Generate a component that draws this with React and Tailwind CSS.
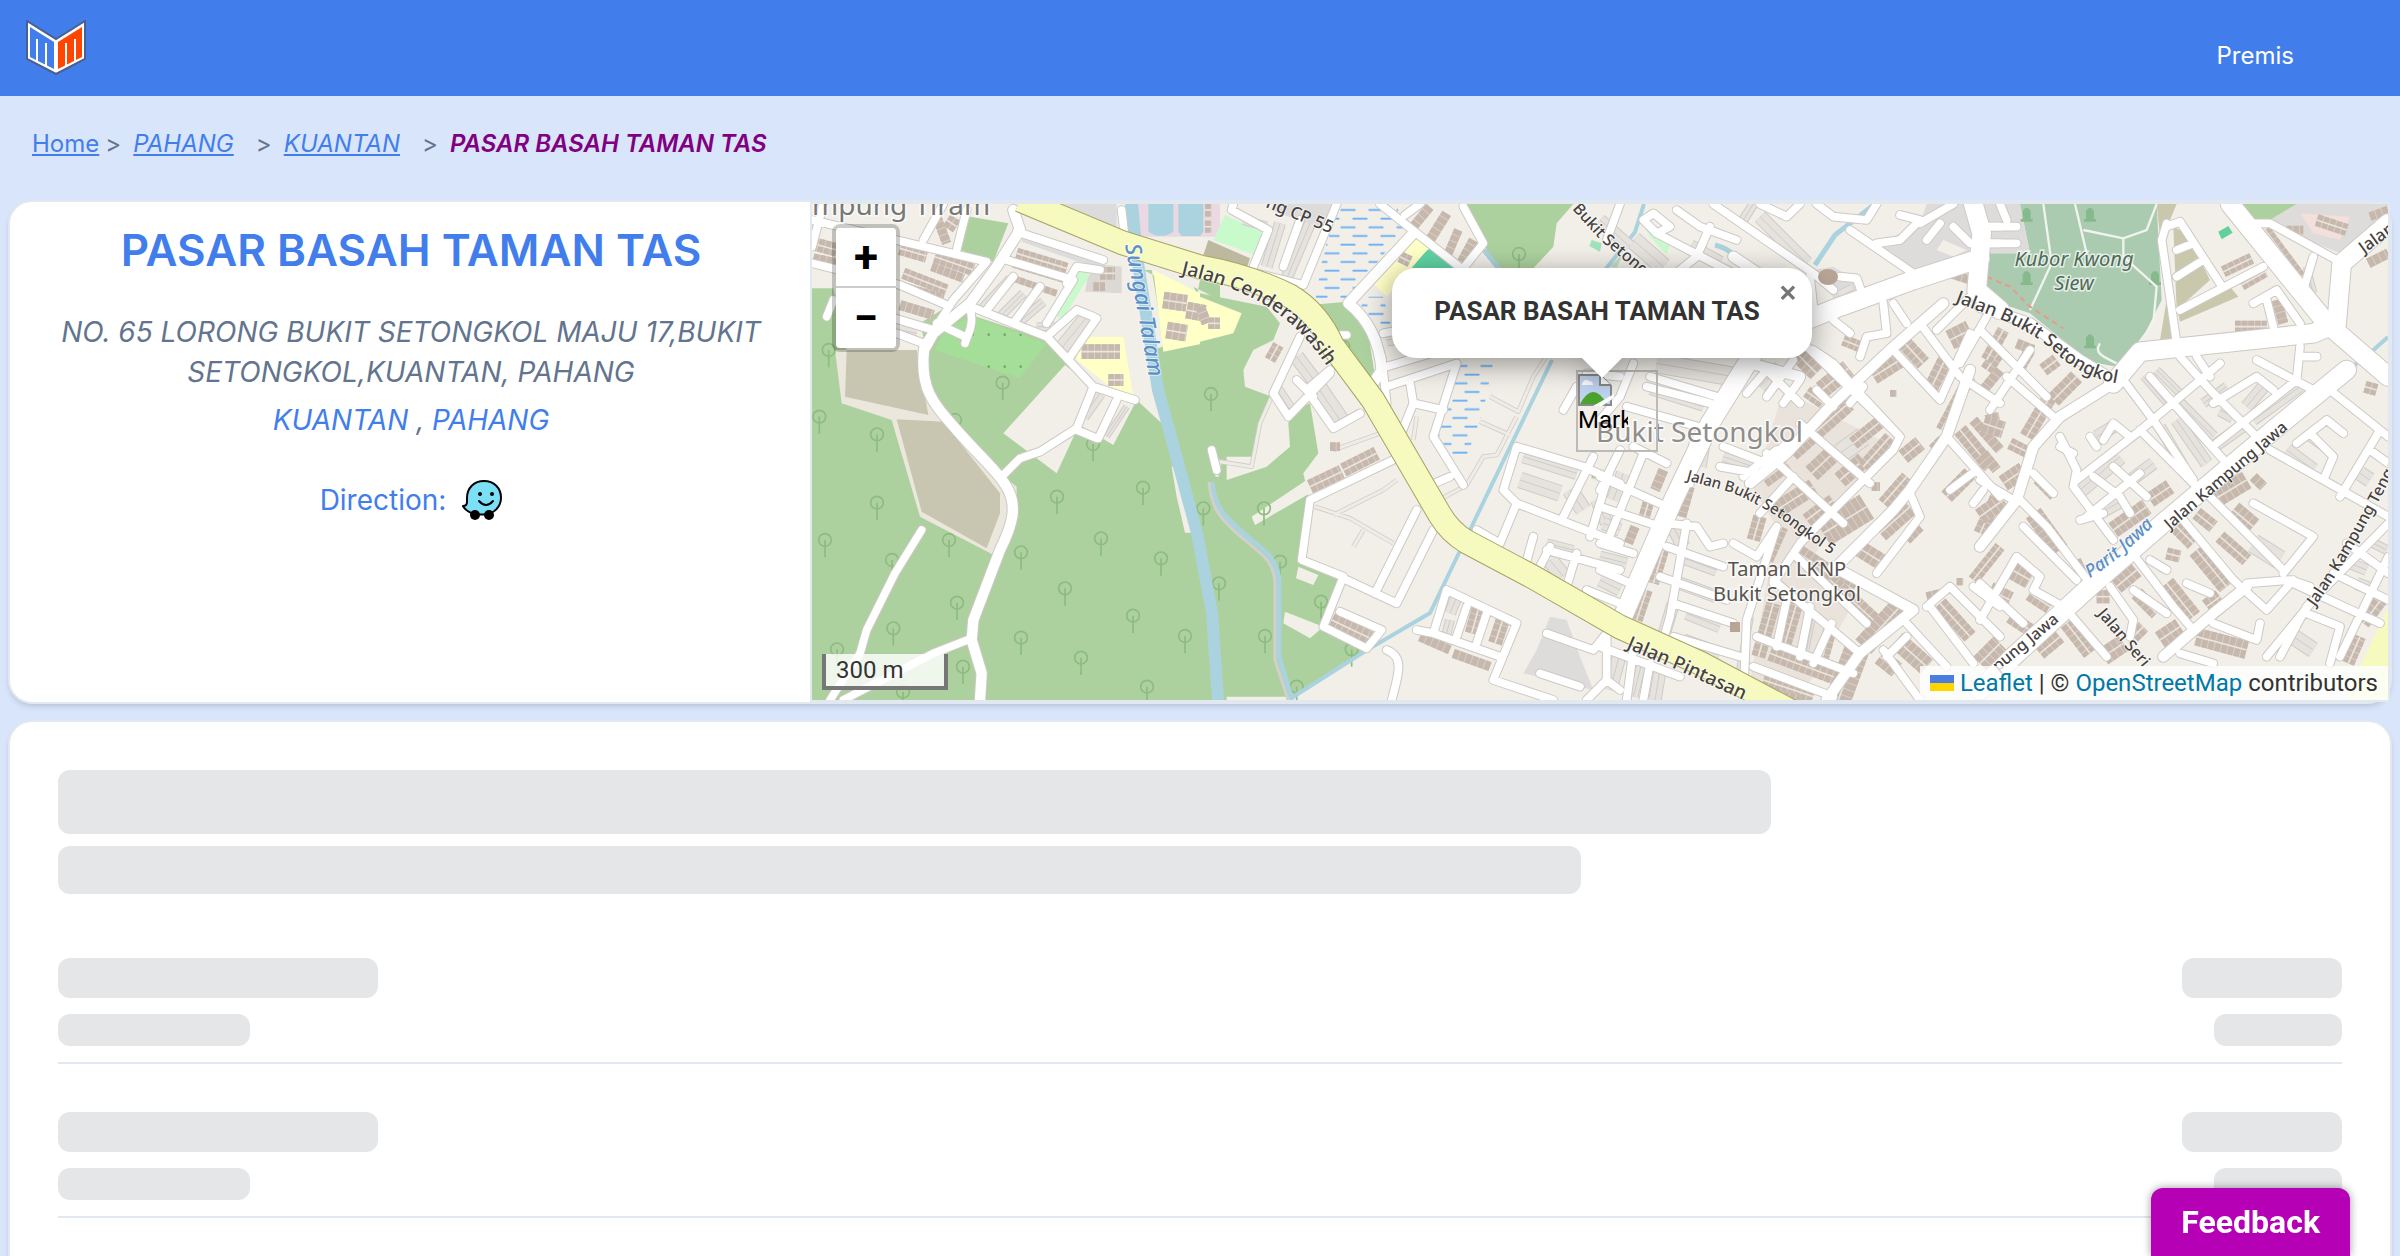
import { useState } from 'react'

const BREADCRUMB = [
  { label: 'PAHANG', href: '#pahang' },
  { label: 'KUANTAN', href: '#kuantan' },
]

// Map data. Each tile has its own origin and holds paths in 1/3 px units.
const TILES = [
  {
    x: 800,
    areas: [
      ['#add19e', 'M36 295H100L120 400L140 480H380L360 400L440 350L740 450L800 520L880 590L1010 630L1085 700L1060 480L1280 400V1530H36Z'],
      ['#add19e', 'M510 80L625 100L580 215L480 180Z'],
      ['#add19e', 'M1030 240L1055 240L1095 480L1260 430L1180 290L1260 330V280L1200 270L1190 320Z'],
      ['#ebe7dc', 'M105 480L125 640L275 690L360 980L600 1105L650 960V890L600 850L400 640L360 480Z'],
      ['#c8c6b1', 'M140 480H350L385 675L135 620Z'],
      ['#c8c6b1', 'M290 688L430 695L600 910V970L560 1075L365 965Z'],
      ['#a5de98', 'M440 410L520 380L740 460L660 565L405 480Z'],
      ['#f2efe9', 'M795 525L880 590L830 720L770 850L610 730Z'],
      ['#f2efe9', 'M830 700L940 765L1005 640L880 590Z'],
      ['#ffffc8', 'M1060 240L1260 340V450L1090 485Z'],
      ['#ffffc8', 'M840 440H970L1000 620L930 590L830 510Z'],
      ['#dcd9d4', 'M870 220L965 230V310L855 305Z'],
      ['#dcdcdc', 'M670 125L905 205L890 235L665 155Z'],
      ['#dcdcdc', 'M780 42H950V110L790 75Z'],
      ['#ead9e2', 'M1010 42H1260V140H1010Z'],
      ['#aad3df', 'M975 42H1008V135H975Z'],
      ['#aad3df', 'M1045 42H1120V125Q1082 150 1045 125Z'],
      ['#aad3df', 'M1135 42H1210V125L1200 138H1145L1135 125Z'],
      ['#c8facc', 'M825 235L875 245L790 385L750 375L800 300Z'],
      ['#f2efe9', 'M1115 830L1130 920L1155 1028H1178L1120 830Z'],
    ],
    roads: [
      'M36 90L560 215L460 330L370 470', 'M36 220L300 285L440 345', 'M70 42L36 170', 'M430 42L370 150', 'M500 60L470 180',
      'M80 380L100 330L400 420', 'M290 430L370 460', 'M620 210L820 270L740 400', 'M800 280L830 230L900 240', 'M650 125L910 210',
      'M880 380L830 360L740 440', 'M890 385L810 500', 'M640 260L560 360', 'M720 290L640 400', 'M965 60L975 150',
      'M500 345L740 440L880 590L1005 630', 'M510 360C525 400 500 440 495 460', 'M410 400L495 440',
      'M610 855L660 805L720 785L830 715L880 590', 'M830 720L890 745', 'M950 630L895 745',
      'M365 1020L285 1150L200 1320L180 1390L90 1530', 'M130 1530L400 1390L515 1345', 'M1235 780L1250 840',
    ],
    wide: ['M640 60L660 120L590 230L510 340L400 430L372 480C360 600 400 640 470 720S600 850 625 900S640 1000 600 1080L520 1290L515 1350L545 1450L540 1530'],
    homes: [
      ['M36 160L110 180', 40], ['M40 205L110 220', 30], ['M300 175L380 198', 40], ['M405 200L520 240', 36], ['M395 230L490 265', 26],
      ['M310 250L440 300', 34], ['M310 290L430 325', 26], ['M300 345L400 375', 30], ['M410 80L440 160', 28], ['M440 90L470 110', 40],
      ['M650 190L800 235', 34], ['M640 220L790 265', 26], ['M640 265L770 310', 20], ['M845 485L960 485', 44], ['M925 570H970', 36],
      ['M900 250H945', 38], ['M880 290H915', 26], ['M1090 330L1160 340', 50], ['M1160 360L1215 370', 50], ['M1100 420L1160 430', 50], ['M1225 400H1260', 34],
    ],
    sheds: [['M545 355L630 265', 26], ['M600 380L670 310', 28], ['M660 395L730 335', 28], ['M780 480L870 370', 46], ['M710 410H770', 26], ['M300 420L350 430', 40], ['M850 680L900 610', 36], ['M920 740L980 650', 20]],
    trees: [
      [86, 480], [58, 680], [231, 733], [231, 938], [75, 1050], [447, 1050], [276, 1110], [280, 1315], [471, 1238], [111, 1378], [489, 1430],
      [608, 578], [771, 920], [1029, 893], [903, 1045], [663, 1087], [1083, 1105], [795, 1195], [999, 1277], [663, 1343], [843, 1403], [1155, 1338],
      [1041, 1490], [1232, 612], [879, 762], [465, 690], [309, 1505],
    ],
  },
  {
    x: 1200,
    areas: [
      ['#add19e', 'M0 310L200 350L240 400L220 450L160 480L130 540L135 590L215 620L180 700L160 800L80 800L50 770H25L30 860L80 870L200 830L270 770L265 700L275 660L330 640L355 790L310 850L330 940L300 1110L430 1160L370 1310L500 1380L280 1520H0Z'],
      ['#add19e', 'M330 345L440 335L500 400L530 590L480 580L390 440Z'],
      ['#add19e', 'M790 42H1120L1070 100L1060 170L1000 235H890L850 160Z'],
      ['#f2efe9', 'M155 980L320 870L330 910L165 1005Z'],
      ['#f2efe9', 'M295 1130L355 1155L340 1185L288 1165Z'],
      ['#f2efe9', 'M255 1265L370 1310L330 1345L250 1300Z'],
      ['#5fd3a5', 'M625 225L690 175L760 235H640Z'],
      ['#c8facc', 'M75 75L150 110L205 130L165 195L40 150Z'],
      ['#ffffc8', 'M510 270L650 130L690 170L560 320Z'],
      ['#ffffc8', 'M0 320L125 370L100 430L0 455Z'],
      ['#bcb99f', 'M25 150L150 205L140 235L10 195Z'],
      ['#dddcdb', 'M230 42H400L380 120L210 60Z'],
      ['#dddcdb', 'M1050 1280L1100 1290L1140 1400L1180 1500L970 1450L1010 1380Z'],
      ['#9fe3bd', 'M1175 150L1205 160L1200 185L1168 168Z'],
      ['#c8facc', 'M1185 835L1225 840V880L1180 870Z'],
    ],
    marsh: ['M420 42H590L610 120L440 330L345 340L370 190Z', 'M770 515H880L850 660L800 800H760L715 740Z', 'M490 320L550 320L575 415L520 420L480 370Z'],
    roads: [
      'M150 255L205 120L95 60L100 42', 'M410 42L310 285L150 245', 'M250 230L300 90', 'M540 42L650 130L790 240', 'M615 75L660 42',
      'M545 500L560 640L550 680', 'M560 590L770 520L700 740L790 885', 'M560 530L760 470', 'M550 430L600 420', 'M630 580L640 640L600 740', 'M640 640L730 660',
      'M790 50L850 160L790 235', 'M300 440L220 610L265 680L390 550', 'M390 540L320 600L400 715L480 670', 'M290 570L340 620', 'M380 435L440 435',
      'M330 930L600 800', 'M330 930L305 1110L430 1160L370 1310L500 1375L545 1320L420 1265', 'M650 960L530 1200', 'M700 1020L590 1240L440 1170',
      'M680 890L750 860', 'M560 1380C610 1400 600 1440 575 1530', 'M950 770L1150 830L1260 880', 'M950 770L910 900L950 940L1260 1060', 'M950 940L900 1060L830 1020',
      'M1180 800L1090 980', 'M1230 840L1170 1040', 'M1000 1040L975 1130', 'M1050 1070L1010 1150', 'M1040 1080L1260 1140', 'M1130 1090L1100 1190', 'M1160 1200L1260 1240',
      'M1130 590L1090 660', 'M740 1200L950 1300L880 1470L1060 1530', 'M740 1200L700 1330L650 1320', 'M700 1330L900 1400', 'M800 1250L770 1340', 'M860 1270L830 1360',
      'M1040 1330L1180 1380L1220 1330V1470L1260 1500', 'M1020 1450L1140 1490', 'M1220 1470L1160 1530', 'M1160 550L1260 560',
    ],
    wide: ['M640 130L445 340C520 400 540 480 545 540L500 610'],
    tracks: ['M870 620L955 665L1000 560L1045 490', 'M840 695L930 735', 'M950 680L890 795L850 800L800 885L700 940', 'M345 950L450 985L580 1060', 'M400 975L550 900L590 870', 'M460 1070L490 1020', 'M640 750L650 680', 'M400 780L540 730', 'M50 860L60 815L155 830L180 700L215 620'],
    homes: [
      ['M330 890L425 845', 42], ['M430 840L530 790', 42], ['M640 110L690 50', 28], ['M690 150L740 70', 30], ['M745 190L775 120', 26], ['M785 215L820 150', 28],
      ['M395 1290L510 1345', 44], ['M815 1330L840 1240', 42], ['M885 1360L915 1270', 42], ['M660 1340L750 1380', 28], ['M760 1390L870 1430', 28],
      ['M210 510L235 465', 34], ['M390 770H420', 26], ['M0 350L20 400', 30], ['M25 400H55', 34], ['M600 200L630 215', 34], ['M15 60H35', 40], ['M15 110H35', 36], ['M1175 850H1192', 30],
    ],
    sheds: [
      ['M200 230L240 100', 36], ['M260 265L330 100', 36], ['M290 500L350 580', 46], ['M345 580L420 690', 56], ['M230 600L270 660', 40], ['M750 1270L770 1220', 36], ['M740 1330L750 1290', 30],
      ['M130 90L200 110', 30], ['M560 450L620 440', 40], ['M960 870L1080 910', 50], ['M1110 900L1150 960', 50], ['M970 800L1130 850', 40], ['M1190 930L1220 1000', 40], ['M1050 1110L1090 1160', 50],
      ['M1040 1060L1120 1080', 30], ['M1230 1400V1480', 40],
    ],
    trees: [[33, 612], [957, 192], [195, 1338], [240, 1115], [57, 1180], [363, 1235], [192, 955], [10, 955], [430, 470], [290, 1490], [455, 1378]],
  },
  {
    x: 1600,
    areas: [
      ['#dddcdb', 'M830 165L960 100L980 42H1120L1145 200L960 245Z'],
      ['#dddcdb', 'M700 230L830 310L720 350L640 240Z'],
      ['#c8facc', 'M130 105L210 160L200 195L150 140Z'],
      ['#c8facc', 'M0 835L30 845V880H0Z'],
      ['#c4dfc4', 'M30 230L70 190L50 235Z'],
      ['#f2efe9', 'M1030 150L1100 180L1060 200L1010 180Z'],
      ['#e9e3dc', 'M550 600L860 760L640 1100L760 1240L600 1530H440L530 1010L460 900Z'],
    ],
    roads: [
      'M60 42L20 150', 'M160 70L210 110L170 130L130 90Z', 'M170 130L400 250', 'M230 60L300 110L410 150', 'M340 42L640 250', 'M480 42L560 80L600 42', 'M650 42L700 80L800 90L830 42',
      'M750 120L940 250', 'M830 160L900 150L960 90L900 75', 'M960 100L1060 42', 'M980 150L1020 100', 'M1150 110H1200', 'M1150 160H1200', 'M1060 110L1110 160', 'M330 110L290 200L240 240',
      'M700 390L750 430', 'M850 340L860 430L800 440L780 500', 'M880 340L920 400', 'M720 260L770 265L790 320', 'M640 250L700 300', 'M630 260L640 350',
      'M1110 320L1010 420', 'M600 450L900 740', 'M440 610L500 540L600 640', 'M500 620L580 510', 'M550 640L600 570', 'M640 480L700 520L760 590', 'M760 590L900 740L880 780L700 960L600 1060L520 1180',
      'M500 790L730 1000', 'M600 700L810 880', 'M530 780L430 860', 'M580 860L480 970', 'M880 480L1020 630L1110 430', 'M960 400L1080 560L1200 640', 'M1160 380L1080 520',
      'M1040 740L1200 920', 'M930 910L960 980L830 1150', 'M590 1100L800 1300', 'M520 1170L780 1390', 'M530 1010L440 1290L430 1530', 'M560 1230L530 1370', 'M630 1250L600 1400', 'M695 1300L640 1420',
      'M470 1340L760 1450', 'M460 1430L700 1520', 'M980 1250L1050 1190L1200 1340', 'M990 1250L1120 1420', 'M1120 1190L1200 1250', 'M920 1300L1040 1430', 'M850 1380L960 1530', 'M860 1400L920 1340',
      'M0 860L200 950', 'M0 950L180 1010', 'M0 1060L100 1090', 'M0 1140L90 1180', 'M100 770L200 820', 'M130 790L20 1060', 'M60 780L0 900', 'M200 1000L290 1010L330 1070L370 1060',
      'M260 1000L210 1280L190 1350', 'M180 1160L380 1230', 'M200 1070L370 1130', 'M220 1240L400 1300', 'M220 1340L420 1400', 'M400 1060L470 1100L530 1010', 'M360 830L470 850', 'M370 770L500 820L560 760',
      'M280 760L270 880', 'M80 650L330 720', 'M140 590L330 640', 'M150 560L350 620', 'M100 520L60 620L0 690', 'M700 650L650 600', 'M790 590L750 640', 'M1050 900L1130 840', 'M1120 940L1150 900',
      'M100 1380L80 1530', 'M150 1420L130 1530', 'M0 1370L240 1460',
    ],
    wide: [
      'M1030 340L870 480L700 640L560 790L450 880', 'M1110 540L1040 740L930 900L880 960L700 1140', 'M700 1130L940 1260L780 1390L680 1530', 'M400 200L640 360', 'M450 520L600 560',
    ],
    main: ['M460 490L330 700L220 930L150 1090L60 1300', 'M620 390L720 350L940 270L1140 205', 'M1120 42L1145 130L1130 300L1200 360'],
    homes: [
      ['M580 480L650 550', 50], ['M665 600L745 535', 54], ['M620 605L670 640', 36], ['M575 790L745 640', 50], ['M760 760L860 680', 40], ['M635 850L710 780', 54], ['M720 870L790 810', 50],
      ['M790 830L870 740', 36], ['M490 870L560 820', 50], ['M530 960L640 890', 50], ['M620 990L700 930', 40], ['M670 1030L800 950', 84], ['M840 1030L930 950', 56], ['M770 1070L850 1120', 50],
      ['M820 560L900 510', 48], ['M910 455L970 520', 45], ['M990 600L1040 500', 44], ['M1050 450L1110 420', 60], ['M1160 540L1200 480', 40], ['M1025 720L1110 560', 36], ['M1080 720L1170 830', 44],
      ['M1120 690L1200 780', 30], ['M1040 920L1110 850', 44], ['M1140 1030L1200 900', 40], ['M1120 1170L1200 1070', 34], ['M500 1110L545 1010', 40], ['M475 1400L520 1240', 42], ['M580 1080L760 1200', 54],
      ['M690 1170L820 1290', 46], ['M790 1370L900 1250', 64], ['M715 1530L770 1380', 76], ['M555 1360L590 1240', 40], ['M665 1410L690 1320', 40], ['M510 1390L700 1460', 44], ['M490 1470L640 1520', 44],
      ['M1020 1240L1110 1340', 44], ['M890 1350L980 1430', 56], ['M1140 1420L1200 1360', 56], ['M190 840L165 900', 30], ['M150 920L130 990', 34], ['M105 1010L85 1060', 28], ['M190 1080L160 1180', 34],
      ['M140 1200L110 1290', 36], ['M270 890L245 980', 28], ['M480 980L460 1050', 40], ['M730 450L780 470', 34], ['M910 800L960 760', 46], ['M850 940L920 860', 36], ['M920 1050L960 1010', 30], ['M1000 780L1030 750', 36],
      ['M1160 700L1200 690', 50], ['M1030 245L1110 270', 26], ['M870 610H890', 20], ['M1070 1175H1090', 22], ['M980 1220L1020 1210', 26], ['M840 1400L890 1440', 50], ['M470 1500L600 1530', 30], ['M815 890H840', 26],
    ],
    sheds: [
      ['M170 520L400 560', 60], ['M100 150L190 230', 56], ['M270 170L360 220', 46], ['M480 80L620 220', 44], ['M30 1500L60 1390', 44], ['M100 1520L125 1420', 30], ['M165 1530L180 1440', 40],
      ['M150 600L310 650', 30], ['M40 930L70 850', 44], ['M300 830L310 770', 40], ['M370 800L460 830', 30], ['M0 1100L80 1120', 36], ['M0 1170L60 1200', 40], ['M240 1100L350 1140', 40], ['M240 1180L350 1220', 40],
      ['M260 1270L360 1310', 40], ['M250 1350L360 1390', 40], ['M220 1010L250 1070', 44], ['M190 1340L220 1240', 40], ['M620 1380L640 1280', 16], ['M420 1440L450 1280', 24], ['M480 590L540 530', 40], ['M720 790L790 740', 60],
      ['M10 1000L60 1020', 40], ['M90 170L0 90', 40], ['M430 90L460 42', 30], ['M720 320L760 300', 40],
    ],
    trees: [],
  },
  {
    x: 1980,
    areas: [
      ['#aacbaf', 'M120 42H530L545 330L480 460L410 530L330 515L150 370L0 320V190H150Z'],
      ['#c9c8ad', 'M530 42H590L545 150L590 450H540L560 330Z'],
      ['#c9c8ad', 'M580 110L620 130L690 270L590 360Z'],
      ['#c9c8ad', 'M590 350L750 290L775 320L600 395Z'],
      ['#dddcdb', 'M0 42H120L150 190H0Z'],
      ['#dddcdb', 'M900 42H1225V110L1080 190L860 100Z'],
      ['#add19e', 'M775 42H950L860 95L820 100Z'],
      ['#62cf9d', 'M715 125L745 108L758 128L725 148Z'],
      ['#f3dfdc', 'M960 70L1110 80L1080 150L1000 130Z'],
      ['#f7fabf', 'M1225 1250L1140 1430L1100 1530H1225Z'],
    ],
    roads: [
      'M560 100L545 150L590 460', 'M560 110L600 95L720 280', 'M590 260L670 210', 'M600 360L850 230', 'M590 180L640 160', 'M820 100L870 100L1070 210', 'M1000 200L970 300L1030 400', 'M820 340L890 300L960 400', 'M860 330L880 410',
      'M430 570L520 690L640 870', 'M510 560L580 640L740 820', 'M600 500L700 610L830 740', 'M650 500L690 560', 'M290 870L470 730L720 520', 'M320 980L480 850', 'M370 750L400 700L450 740', 'M240 740L290 840L280 890L400 1050',
      'M480 720L640 880', 'M700 640L830 560L880 600', 'M830 510L1000 600', 'M710 760L950 570L960 470', 'M960 500H1010', 'M300 990L370 970', 'M340 860L420 920L450 970', 'M400 830L500 920', 'M330 740L350 770',
      'M1050 600L1225 740', 'M1200 720L1080 920', 'M870 780L1030 870L1225 980', 'M950 760L1040 690L1090 730', 'M1000 740L1060 800L1030 870', 'M1170 780L1225 820', 'M1225 1000L980 1250L900 1400', 'M690 920L830 1060L910 1140',
      'M820 940L1000 1040L910 1150', 'M610 990L760 1170L860 1260L940 1170', 'M800 1180L930 1170L990 1190', 'M450 1080L580 1250L640 1320', 'M390 1190L460 1290L450 1340', 'M510 1110L560 1140', 'M120 930L200 1010L330 1180',
      'M130 1010L290 1170', 'M260 1260L380 1400', 'M700 1300L830 1350L840 1300', 'M940 1180L1200 1300', 'M980 1270L1080 1310L1050 1420', 'M1060 1150L1225 1230', 'M1100 1060L1225 1150', 'M1225 1100L1080 1400',
      'M0 1290L110 1100L180 1160L160 1200L250 1250', 'M0 1180L130 1300', 'M0 870L100 930', 'M80 560L220 680', 'M30 660L150 480', 'M0 420L200 620', 'M160 850L220 910', 'M240 770L280 790', 'M620 1180L690 1210', 'M600 1390L700 1420',
      'M860 1400L1000 1230', 'M460 1200L560 1270', 'M0 110H110', 'M0 160H110', 'M60 42L80 90',
    ],
    wide: ['M0 350L150 400L300 510L400 570', 'M400 580L240 680L160 770L110 930L0 1070', 'M800 1190L700 1270L550 1400'],
    main: ['M1100 540L880 720L560 990L330 1190L100 1400L0 1500', 'M400 580L480 485L1000 430L1070 400L1085 220L1225 100', 'M750 42L1040 400L1225 560'],
    homes: [
      ['M20 510L70 420', 36], ['M10 600L60 540', 30], ['M110 460L160 480', 30], ['M140 740L210 620', 44], ['M220 630L290 560', 46], ['M110 550L150 480', 34], ['M190 540L230 510', 40], ['M70 880L130 840', 50], ['M0 980L70 930', 50],
      ['M160 970L240 1080', 54], ['M170 870L220 920', 26], ['M80 1130L150 1170', 56], ['M30 1200L90 1230', 50], ['M150 1210L210 1250', 46], ['M90 1280L150 1320', 40], ['M180 1390L240 1340', 40], ['M400 1020L500 950', 50], ['M510 930L570 890', 46],
      ['M700 930L800 870', 56], ['M760 960L820 1010', 56], ['M590 1010L640 1060', 46], ['M650 1080L740 1190', 54], ['M720 1040L800 1110', 40], ['M410 1190L470 1140', 46], ['M470 1210L530 1270', 42], ['M560 1180L640 1280', 50],
      ['M680 1250L720 1220', 46], ['M540 1350L600 1310', 54], ['M650 1340L800 1380', 54], ['M370 1400L430 1360', 54], ['M260 1300L330 1390', 44], ['M730 245L815 205', 34], ['M785 285L855 245', 34], ['M855 120L960 260', 34],
      ['M765 410L860 410', 36], ['M890 330L910 400', 30], ['M1150 1300L1210 1220', 40], ['M1105 1420L1140 1340', 36], ['M1155 590L1190 600', 36], ['M1165 220L1225 190', 30], ['M920 120H970', 26], ['M1010 90L1100 120', 36], ['M350 1220H390', 40],
      ['M560 1090L600 1100', 36], ['M90 760L150 790', 36], ['M290 1110L310 1150', 26], ['M10 700L70 720', 50], ['M10 790L50 840', 30], ['M650 970L700 1010', 40], ['M1170 80L1225 60', 26], ['M460 1340L490 1310', 40], ['M530 1120L550 1140', 22], ['M820 860L850 890', 30],
    ],
    sheds: [
      ['M490 560L560 640', 22], ['M530 540L600 610', 26], ['M600 640L700 740', 36], ['M540 710L610 830', 36], ['M590 690L680 820', 40], ['M300 900L420 800', 50], ['M440 880L520 820', 40], ['M700 770L800 700', 40],
      ['M800 650L850 590', 40], ['M820 690L960 590', 36], ['M720 660L760 680', 40], ['M340 980L430 930', 40], ['M350 740L400 710', 40], ['M920 780L1000 840', 44], ['M970 730L1040 780', 24], ['M820 1060L900 1110', 60], ['M940 1340L1000 1380', 50],
      ['M1130 1180L1180 1200', 40], ['M1110 1120L1160 1140', 36], ['M1140 850L1170 870', 46], ['M670 640L740 590', 30], ['M980 230L1000 310', 24], ['M1180 1060L1220 1080', 30],
    ],
    trees: [],
  },
]

const LABELS = [
  { text: 'Sungai Talam', d: 'M1125 245L1139 320L1152 395', size: 22, kind: 'water' },
  { text: 'Jalan Cenderawasih', d: 'M1181 274C1240 288 1290 306 1332 374', size: 19, kind: 'road' },
  { text: 'ng CP 55', d: 'M1265 207L1330 233', size: 17, kind: 'road' },
  { text: 'Bukit Setongkol', d: 'M1572 209L1600 240L1660 290', size: 16, kind: 'road' },
  { text: 'Jalan Bukit Setongkol', d: 'M1955 302L2000 319Q2040 336 2060 357Q2088 380 2122 384', size: 18, kind: 'road' },
  { text: 'Jalan Bukit Setongkol 5', d: 'M1686 480L1733 493Q1775 512 1800 533L1846 565', size: 15, kind: 'road' },
  { text: 'Jalan Pintasan', d: 'M1626 648L1680 671L1754 705', size: 19, kind: 'road' },
  { text: 'Jalan Kampung Jawa', d: 'M2170 530L2294 424', size: 16, kind: 'road' },
  { text: 'pung Jawa', d: 'M1998 672L2062 619', size: 16, kind: 'road' },
  { text: 'Parit Jawa', d: 'M2090 578Q2120 560 2162 517', size: 18, kind: 'water' },
  { text: 'Jalan Kampung Tengah', d: 'M2315 607Q2355 550 2400 460', size: 16, kind: 'road' },
  { text: 'Jalan Seri', d: 'M2097 614L2153 680', size: 16, kind: 'road' },
  { text: 'Jalan', d: 'M2364 254L2400 228', size: 17, kind: 'road' },
]

const RIVERS = [
  ['M1132 204L1137 257L1158 390L1170 433L1197 533L1212 613L1218 700', 12],
  ['M1552 360L1510 447L1470 530L1457 557L1430 613L1367 650L1293 697', 4],
  ['M1212 482C1214 505 1222 515 1243 533S1278 557 1279 583V657L1292 700', 5],
  ['M1644 204L1635 232L1605 270', 4],
  ['M1875 204L1835 235L1815 265', 5],
  ['M1715 245Q1735 250 1745 270', 5],
  ['M1484 250L1500 270', 5],
  ['M2388 337L2370 353M2357 363L2330 390', 4],
  ['M2167 530L2133 557', 3],
]

const YELLOW_ROAD =
  'M1020 200L1123 243L1200 267Q1250 276 1290 296Q1318 313 1332 345L1373 400L1440 515Q1450 532 1467 542L1533 577L1620 627L1700 663L1800 716'

const TOMBS = [[140, 75], [330, 75], [140, 265], [330, 455], [525, 265]]

function Tile({ tile, children }) {
  return <g transform={`translate(${tile.x} 190) scale(0.33333)`}>{children}</g>
}

function StreetMap() {
  return (
    <svg
      className="absolute inset-0 h-full w-full font-['Noto_Sans',sans-serif]"
      viewBox="812 204 1576 496"
      preserveAspectRatio="xMidYMid slice"
      fill="none"
      aria-hidden="true"
    >
      <defs>
        <pattern id="marsh" width="84" height="52" patternUnits="userSpaceOnUse">
          <path d="M4 8H44M40 34H80" stroke="#70b2f3" strokeWidth="6" strokeLinecap="round" />
        </pattern>
        <pattern id="orchard" width="48" height="96" patternUnits="userSpaceOnUse">
          <circle cx="38" cy="50" r="4" fill="#6cae62" />
        </pattern>
      </defs>
      <rect x="812" y="204" width="1576" height="496" fill="#f2efe9" />

      {TILES.map((tile) => (
        <Tile key={tile.x} tile={tile}>
          {tile.areas.map(([fill, d], i) => (
            <path key={i} d={d} fill={fill} />
          ))}
          {tile.marsh?.map((d) => (
            <path key={d} d={d} fill="url(#marsh)" />
          ))}
          {tile.trees.map(([x, y]) => (
            <g key={`${x}-${y}`} stroke="#8dbb80" strokeWidth="5">
              <circle cx={x} cy={y} r="19" />
              <path d={`M${x} ${y}v52`} />
            </g>
          ))}
        </Tile>
      ))}
      <Tile tile={TILES[0]}>
        <path d="M440 410L520 380L740 460L660 565L405 480Z" fill="url(#orchard)" />
      </Tile>

      {/* Cemetery */}
      <Tile tile={TILES[3]}>
        {TOMBS.map(([x, y]) => (
          <path key={`${x}-${y}`} d={`M${x - 18} ${y + 20}h36v-8h-6v-24q-12-20-24 0v24h-6z`} fill="#86ba8d" />
        ))}
        <path
          d="M190 42L215 220L150 360M285 42L320 190M310 120L430 145L500 120L530 42M430 145V200L530 290L520 400L430 520M360 460C340 490 370 500 410 520"
          stroke="#f1f3ee"
          strokeWidth="7"
        />
        <path d="M20 260L90 290L150 350L250 415" stroke="#e99a90" strokeWidth="6" strokeDasharray="18 12" />
      </Tile>

      {RIVERS.map(([d, width]) => (
        <path key={d} d={d} stroke="#aad3df" strokeWidth={width} />
      ))}
      <path d="M1209 482C1211 507 1219 518 1240 536S1274 560 1275 583V660L1288 700" stroke="#d3cfca" strokeWidth="3" />

      {TILES.map((tile) => (
        <Tile key={tile.x} tile={tile}>
          {tile.tracks && (
            <g strokeLinejoin="round">
              <path d={tile.tracks.join('')} stroke="#d2cec9" strokeWidth="14" />
              <path d={tile.tracks.join('')} stroke="#efebe6" strokeWidth="9" />
            </g>
          )}
          {tile.sheds.map(([d, width]) => (
            <g key={d}>
              <path d={d} stroke="#cfcbc6" strokeWidth={width} />
              <path d={d} stroke="#e6e3df" strokeWidth={width - 6} />
              <path d={d} stroke="#cfcbc6" strokeWidth="3" />
            </g>
          ))}
          {tile.homes.map(([d, width]) => (
            <g key={d}>
              <path d={d} stroke="#d9cfc7" strokeWidth={width} />
              <path d={d} stroke="#c6b8ac" strokeWidth={width} strokeDasharray="17 3" />
              {width > 30 && <path d={d} stroke="#ebe5de" strokeWidth="5" />}
            </g>
          ))}
        </Tile>
      ))}

      {/* Road casings first so that junctions stay open */}
      {TILES.map((tile) => (
        <Tile key={tile.x} tile={tile}>
          <g stroke="#cdc9c5" strokeLinecap="round" strokeLinejoin="round">
            <path d={tile.roads.join('')} strokeWidth="29" />
            <path d={tile.wide.join('')} strokeWidth="37" />
            {tile.main && <path d={tile.main.join('')} strokeWidth="62" />}
          </g>
        </Tile>
      ))}
      {TILES.map((tile) => (
        <Tile key={tile.x} tile={tile}>
          <g stroke="#ffffff" strokeLinecap="round" strokeLinejoin="round">
            <path d={tile.roads.join('')} strokeWidth="23" />
            <path d={tile.wide.join('')} strokeWidth="31" />
            {tile.main && <path d={tile.main.join('')} strokeWidth="56" />}
          </g>
        </Tile>
      ))}
      <ellipse cx="1828" cy="277" rx="10" ry="8" fill="#b9a596" />
      <rect x="1730" y="622" width="10" height="10" fill="#b9a596" />

      <path d={YELLOW_ROAD} stroke="#a7a466" strokeWidth="25" />
      <path d={YELLOW_ROAD} stroke="#f7fabf" strokeWidth="23" />

      {/* Place names */}
      <g fill="#777777" stroke="#ffffff" strokeWidth="3" strokeOpacity="0.7" paintOrder="stroke">
        <text x="812" y="215" fontSize="28">
          mpung Tiram
        </text>
        <text x="1596" y="442" fontSize="28" fill="#8f8d8b">
          Bukit Setongkol
        </text>
        <g fill="#55524f" textAnchor="middle" fontSize="20">
          <text x="1787" y="576">
            Taman LKNP
          </text>
          <text x="1787" y="601">
            Bukit Setongkol
          </text>
        </g>
        <g fill="#4f6a58" textAnchor="middle" fontSize="20" fontStyle="italic">
          <text x="2074" y="266">
            Kubor Kwong
          </text>
          <text x="2074" y="290">
            Siew
          </text>
        </g>
      </g>
      {LABELS.map((label, i) => (
        <g key={i}>
          <path id={`label-${i}`} d={label.d} />
          <text
            fontSize={label.size}
            fontWeight="500"
            fill={label.kind === 'water' ? '#5b8fc7' : '#46423f'}
            fontStyle={label.kind === 'water' ? 'italic' : 'normal'}
            stroke="#ffffff"
            strokeWidth="2"
            strokeOpacity="0.6"
            paintOrder="stroke"
          >
            <textPath href={`#label-${i}`}>{label.text}</textPath>
          </text>
        </g>
      ))}
    </svg>
  )
}

function Logo() {
  return (
    <svg className="h-14 w-15" viewBox="0 0 60 56">
      <path d="M1 1L30 19L59 1V39L30 54L1 39Z" fill="#fff" stroke="#4a5f8f" strokeWidth="2" />
      <path d="M4 7L28 22V49L4 37Z" fill="#427eeb" />
      <path d="M56 7L32 22V49L56 37Z" fill="#ff4500" />
      <path d="M11 41V19M20 46V23M40 46V23M49 41V19" stroke="#fff" strokeWidth="2" fill="none" />
    </svg>
  )
}

function WazeIcon() {
  return (
    <svg className="h-10 w-10" viewBox="0 0 40 40">
      <path
        d="M22 1C32 1 39 8 39 17.500C39 27 32 34 22 34.500H14C8 33 3 30 1 26C3 26 5 25 5 22V18C5 8 12 1 22 1Z"
        fill="#7be0f5"
        stroke="#000"
        strokeWidth="2"
        strokeLinejoin="round"
      />
      <circle cx="13" cy="35" r="5" />
      <circle cx="27" cy="35" r="5" />
      <circle cx="18" cy="14" r="2" />
      <circle cx="30" cy="14" r="2" />
      <path d="M17 21Q24 29 31 21" fill="none" stroke="#000" strokeWidth="2" strokeLinecap="round" />
    </svg>
  )
}

// Placeholder the browser shows for a marker image that failed to load
function BrokenMarker() {
  return (
    <div className="absolute top-[166px] left-[764px] h-[82px] w-[82px] border-2 border-[#bdbbb8]">
      <svg className="mt-0.5 h-8 w-9" viewBox="0 0 36 32">
        <path d="M1 1H22L33 12V31H1Z" fill="#c3d7f5" stroke="#8b8b8b" strokeWidth="2" />
        <path d="M4 10Q6 4 11 7Q15 7 15 11H4Z" fill="#fff" />
        <path d="M2 30Q15 6 29 30Z" fill="#4ba62b" />
        <path d="M22 1V11H33" fill="#fff" stroke="#8b8b8b" strokeWidth="2" />
        <path d="M15 32L36 20V24L24 32Z" fill="#fff" />
      </svg>
      <div className="w-[50px] overflow-hidden text-[24px] leading-[28px] text-black">Marker</div>
    </div>
  )
}

function MapPanel() {
  const [popupOpen, setPopupOpen] = useState(true)

  return (
    <div className="relative overflow-hidden border-2 border-slate-200 font-['Roboto',sans-serif] text-[#333]">
      <StreetMap />
      <BrokenMarker />

      {popupOpen && (
        <div className="absolute top-16 left-[580px] w-[420px] drop-shadow-[0_6px_14px_rgba(0,0,0,0.4)]">
          <div className="flex h-[90px] items-center justify-center rounded-3xl bg-white pr-2.5 pb-1 text-[26px] font-bold">
            PASAR BASAH TAMAN TAS
          </div>
          <div className="mx-auto h-5 w-10 bg-white [clip-path:polygon(0_0,100%_0,50%_100%)]" />
          <button
            type="button"
            aria-label="Close popup"
            onClick={() => setPopupOpen(false)}
            className="absolute top-0 right-0 h-12 w-12 text-[32px] leading-[46px] font-medium text-[#757575]"
          >
            ×
          </button>
        </div>
      )}

      {/* Zoom */}
      <div className="absolute top-5 left-5 flex flex-col rounded-lg border-4 border-black/20 bg-clip-padding">
        <button type="button" aria-label="Zoom in" className="h-[60px] w-[60px] rounded-t-sm border-b-2 border-[#ccc] bg-white text-[44px] leading-[58px] font-bold text-black">
          +
        </button>
        <button type="button" aria-label="Zoom out" className="h-[60px] w-[60px] rounded-b-sm bg-white text-[44px] leading-[58px] font-bold text-black">
          −
        </button>
      </div>

      <div className="absolute bottom-2.5 left-2.5 h-9 w-[126px] border-4 border-t-0 border-[#777] bg-white/80 px-2.5 text-[24px] leading-[32px]">
        300 m
      </div>

      <div className="absolute right-0 bottom-0 flex items-center bg-white/80 px-2.5 text-[24px] leading-[34px] whitespace-pre">
        <a href="#leaflet" className="flex items-center gap-1.5 text-[#0078a8]">
          <svg className="h-4 w-6" viewBox="0 0 12 8">
            <path fill="#4C7BE1" d="M0 0h12v4H0z" />
            <path fill="#FFD500" d="M0 4h12v4H0z" />
          </svg>
          Leaflet
        </a>
        <span> | © </span>
        <a href="#osm" className="text-[#0078a8]">
          OpenStreetMap
        </a>
        <span> contributors</span>
      </div>
    </div>
  )
}

function SkeletonRow() {
  return (
    <div className="flex justify-between border-b-2 border-slate-200 pt-12 pb-4">
      <div className="flex flex-col gap-4">
        <div className="h-10 w-80 rounded-xl bg-[#e5e6e8]" />
        <div className="h-8 w-48 rounded-xl bg-[#e5e6e8]" />
      </div>
      <div className="flex flex-col items-end gap-4">
        <div className="h-10 w-40 rounded-xl bg-[#e5e6e8]" />
        <div className="h-8 w-32 rounded-xl bg-[#e5e6e8]" />
      </div>
    </div>
  )
}

export default function App() {
  return (
    <div className="h-screen overflow-hidden bg-[#d9e5fb] font-['Inter',sans-serif] text-[24px] text-slate-500">
      <header className="flex h-24 items-center justify-between bg-[#427eeb] pr-[106px] pl-[26px]">
        <a href="#home" aria-label="Home">
          <Logo />
        </a>
        <nav className="pt-4">
          <a href="#premis" className="text-white">
            Premis
          </a>
        </nav>
      </header>

      <nav aria-label="Breadcrumb" className="flex h-[104px] items-center px-8 pb-2">
        <a href="#home" className="text-[#427eeb] underline">
          Home
        </a>
        {BREADCRUMB.map((crumb) => (
          <span key={crumb.label} className="flex">
            <span className="w-[34px] pl-1.5">&gt;</span>
            <a href={crumb.href} className="mr-4 text-[#427eeb] italic underline">
              {crumb.label}
            </a>
          </span>
        ))}
        <span className="pr-3 pl-1.5">&gt;</span>
        <span className="font-semibold text-[#800080] italic">PASAR BASAH TAMAN TAS</span>
      </nav>

      <main className="flex flex-col gap-4 px-2">
        <section className="grid h-[504px] grid-cols-[1fr_2fr] gap-2.5 rounded-3xl border-2 border-slate-200 bg-white shadow-md">
          <div className="flex flex-col items-center pt-5 pl-3 text-center text-[28px] leading-[40px]">
            <h1 className="text-[44px] leading-[56px] font-semibold text-[#427eeb]">PASAR BASAH TAMAN TAS</h1>
            <p className="mt-[34px] px-8 italic">NO. 65 LORONG BUKIT SETONGKOL MAJU 17,BUKIT SETONGKOL,KUANTAN, PAHANG</p>
            <p className="mt-2 italic">
              <a href="#kuantan" className="text-[#427eeb]">
                KUANTAN
              </a>{' '}
              ,{' '}
              <a href="#pahang" className="text-[#427eeb]">
                PAHANG
              </a>
            </p>
            <div className="mt-10 flex items-center gap-4 text-[#427eeb]">
              Direction:
              <a href="#waze" aria-label="Open in Waze">
                <WazeIcon />
              </a>
            </div>
          </div>
          <MapPanel />
        </section>

        <section className="rounded-3xl border-2 border-slate-200 bg-white p-12 shadow-md">
          <div className="mb-3 h-16 w-3/4 rounded-xl bg-[#e5e6e8]" />
          <div className="mb-4 h-12 w-2/3 rounded-xl bg-[#e5e6e8]" />
          <SkeletonRow />
          <SkeletonRow />
          <SkeletonRow />
        </section>
      </main>

      <button
        type="button"
        className="fixed right-[50px] bottom-0 h-[68px] rounded-t-xl bg-[#b600b6] px-[30px] font-['Roboto',sans-serif] text-[32px] leading-[68px] font-bold text-white shadow-[0_0_8px_rgba(0,0,0,0.4)]"
      >
        Feedback
      </button>
    </div>
  )
}
